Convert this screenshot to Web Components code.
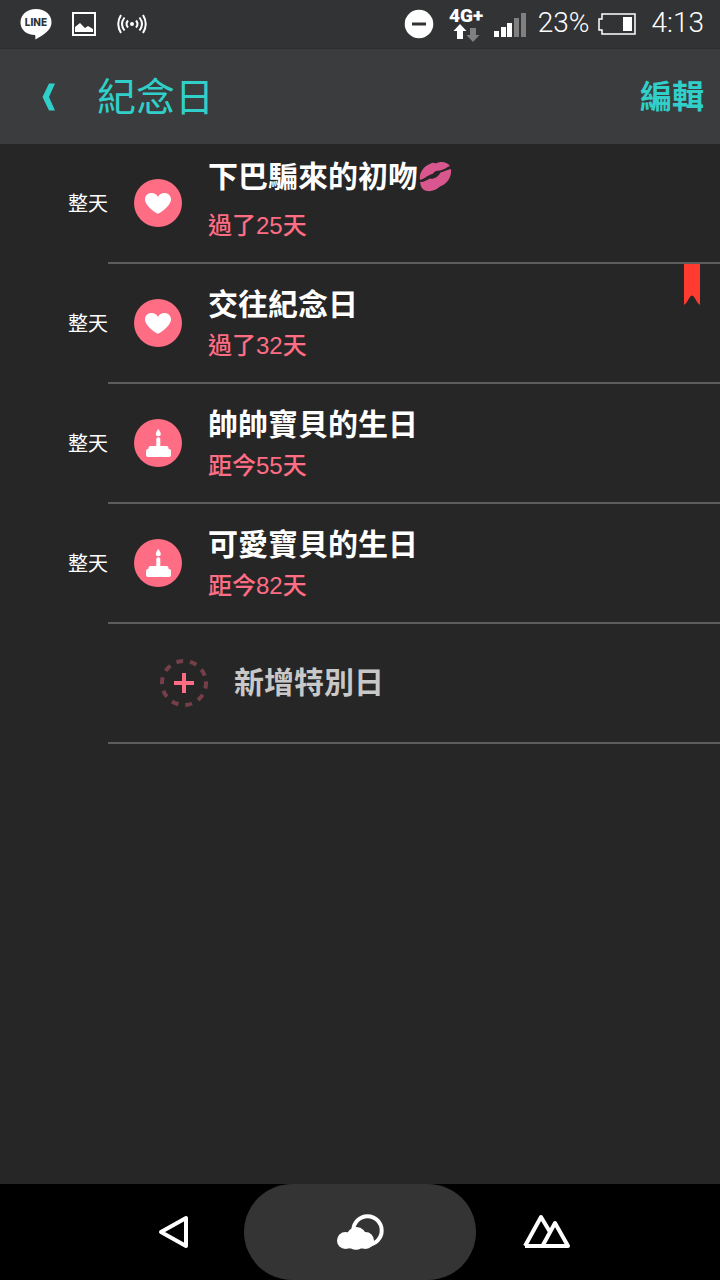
<!DOCTYPE html>
<html lang="zh-Hant">
<head>
  <meta charset="utf-8">
  <meta name="viewport" content="width=device-width, initial-scale=1">
  <title>紀念日</title>
  <style>
    :root {
      --color-bg: #262626;
      --color-bar: #3b3c3d;
      --color-status: #323334;
      --color-accent: #30cfc9;
      --color-pink: #ff6d85;
      --color-line: #5c5c5c;
      --color-muted: #c8c8c8;
    }

    body {
      margin: 0;
      min-height: 100vh;
      display: flex;
      flex-direction: column;
      background: var(--color-bg);
      color: #fff;
      font-family: Roboto, "Noto Sans CJK TC", sans-serif;
    }

    main {
      flex: 1;
    }
  </style>
</head>
<body>
  <status-bar battery="23%" time="4:13"></status-bar>
  <app-header>紀念日<span slot="action">編輯</span></app-header>
  <main>
    <day-item icon="heart" tall>下巴騙來的初吻<kiss-mark></kiss-mark><span slot="count">過了25天</span></day-item>
    <day-item icon="heart" marked>交往紀念日<span slot="count">過了32天</span></day-item>
    <day-item icon="cake">帥帥寶貝的生日<span slot="count">距今55天</span></day-item>
    <day-item icon="cake">可愛寶貝的生日<span slot="count">距今82天</span></day-item>
    <add-item>新增特別日</add-item>
  </main>
  <nav-bar></nav-bar>

  <script>
    const icons = {
      heart: `<svg width="48" height="48" viewBox="0 0 48 48" fill="#fff">
        <path d="M24 34.500C22 34.500 11 26.500 11 20.500C11 16.500 14 14 17.500 14C20.500 14 22.800 15.500 24 18C25.200 15.500 27.500 14 30.500 14C34 14 37 16.500 37 20.500C37 26.500 26 34.500 24 34.500Z"/>
      </svg>`,
      cake: `<svg width="48" height="48" viewBox="0 0 48 48" fill="#fff">
        <path d="M24.300 10C25.500 12 26.800 13.200 26.800 14.800A2.500 2.500 0 0 1 21.800 14.800C21.800 13.200 23.200 12 24.300 10Z"/>
        <path d="M22.300 20Q22.300 18.300 24.300 18.300Q26.300 18.300 26.300 20V27H33Q34.500 27 34.700 30H35.200Q37 30 37 32V36Q37 38 35 38H14Q12 38 12 36V32Q12 30 13.800 30H14.300Q14.500 27 16 27H22.300Z"/>
      </svg>`
    };

    class StatusBar extends HTMLElement {
      constructor() {
        super();
        this.attachShadow({ mode: 'open' });
      }

      connectedCallback() {
        this.shadowRoot.innerHTML = `
          <style>
            :host {
              display: flex;
              justify-content: space-between;
              align-items: center;
              box-sizing: border-box;
              height: 49px;
              padding: 0 16px 0 20px;
              background: var(--color-status);
              border-bottom: 1px solid #2b2c2c;
              font-size: 28px;
              font-weight: 300;
              line-height: 32px;
            }
            .group {
              display: flex;
              align-items: center;
            }
            .left { gap: 20px; }
            .right { gap: 10px; }
            .level {
              display: flex;
              align-items: center;
              gap: 8px;
              margin-left: 2px;
            }
            .time { margin-left: 6px; }
            .text { padding-bottom: 2px; }
            .network { margin-left: 4px; }
            svg { display: block; }
          </style>
          <div class="group left">
            <svg width="32" height="32" viewBox="0 0 32 32">
              <path fill="#fff" d="M16 1C25 1 31.500 6.500 31.500 14.500C31.500 21.500 24.500 26.500 15.500 31.500C15 30 15.800 28.500 15 27C6.500 27 .5 21.500 .5 14.500C.5 6.500 7 1 16 1Z"/>
              <text x="16" y="18" text-anchor="middle" font-family="Inter, sans-serif" font-size="10" font-weight="800" fill="#323334">LINE</text>
            </svg>
            <svg width="24" height="24" viewBox="0 0 24 24">
              <rect x="1" y="1" width="22" height="22" fill="none" stroke="#fff" stroke-width="2"/>
              <path fill="#fff" d="M3 20V15L8 11L13 16L16 14L21 17V20Z"/>
            </svg>
            <svg width="32" height="24" viewBox="0 0 32 24" fill="none" stroke="#fff" stroke-width="2">
              <circle cx="16" cy="12" r="2" fill="#fff" stroke="none"/>
              <path d="M12 8.500Q9 12 12 15.500M8.500 5.500Q3.500 12 8.500 18.500M5 3Q-.5 12 5 21M20 8.500Q23 12 20 15.500M23.500 5.500Q28.500 12 23.500 18.500M27 3Q32.500 12 27 21"/>
            </svg>
          </div>
          <div class="group right">
            <svg width="30" height="30" viewBox="0 0 30 30">
              <circle cx="15" cy="15" r="14.300" fill="#fff"/>
              <path d="M8 15H22" stroke="#323334" stroke-width="3"/>
            </svg>
            <svg class="network" width="36" height="44" viewBox="0 -4 36 44">
              <text x="1" y="16" font-family="Roboto, sans-serif" font-size="19" font-weight="900" fill="#fff">4G+</text>
              <path fill="#fff" d="M12 18L18.500 25H15V33H9V25H5.500Z"/>
              <path fill="#808080" d="M25 36L31.500 29H28V22H22V29H18.500Z"/>
            </svg>
            <svg width="32" height="26" viewBox="0 0 32 26" fill="#fff">
              <path d="M0 20H5V26H0ZM7 16H12V26H7ZM13 12H18V26H13Z"/>
              <path fill="#808080" d="M20 7H25V26H20ZM27 2H32V26H27Z"/>
            </svg>
            <div class="level">
              <span class="text">${this.getAttribute('battery')}</span>
              <svg width="38" height="22" viewBox="0 0 38 22">
                <path fill="none" stroke="#fff" stroke-width="1.500" d="M4 1H37V21H4V17H1V6H4Z"/>
                <rect x="25" y="4" width="9" height="14" fill="#fff"/>
              </svg>
            </div>
            <span class="text time">${this.getAttribute('time')}</span>
          </div>
        `;
      }
    }

    customElements.define('status-bar', StatusBar);

    class AppHeader extends HTMLElement {
      constructor() {
        super();
        this.attachShadow({ mode: 'open' });
        this.shadowRoot.innerHTML = `
          <style>
            :host {
              display: flex;
              align-items: center;
              box-sizing: border-box;
              height: 95px;
              padding: 0 16px 0 0;
              background: var(--color-bar);
              color: var(--color-accent);
            }
            button {
              display: block;
              padding: 0;
              border: 0;
              background: none;
              color: inherit;
              font: inherit;
            }
            .back {
              width: 97px;
              height: 95px;
            }
            .back svg {
              display: block;
              margin: 0 auto;
            }
            h1 {
              flex: 1;
              margin: 0;
              padding-top: 2px;
              font-size: 39px;
              font-weight: 400;
              line-height: 56px;
            }
            .action {
              font-size: 32px;
              font-weight: 700;
              line-height: 48px;
            }
          </style>
          <button class="back" type="button" aria-label="返回">
            <svg width="14" height="28" viewBox="0 0 14 28" fill="currentColor"><path d="M7 0.500H13L7 14L13 27.500H7L0.500 14Z"/></svg>
          </button>
          <h1><slot></slot></h1>
          <button class="action" type="button"><slot name="action"></slot></button>
        `;
      }
    }

    customElements.define('app-header', AppHeader);

    class KissMark extends HTMLElement {
      constructor() {
        super();
        this.attachShadow({ mode: 'open' });
        this.shadowRoot.innerHTML = `
          <style>
            :host {
              display: inline-block;
              vertical-align: middle;
            }
            svg { display: block; }
          </style>
          <svg width="34" height="36" viewBox="0 0 34 36" role="img" aria-label="💋" fill="#d9578e">
            <path d="M2 19C.5 12 6 5 12 3C14 1.500 16 1.500 18 2.500C22 0 29 .5 32 5C28 6.500 26 9 21.500 9.500C18 9.500 16.500 10.500 14.500 13C9 14 8 17.500 2 19Z"/>
            <path d="M2 21C7 21 8.500 19 12 17.500C15 18.500 20 16.500 22.500 11.500C26 11 29 8.500 33 8C34 17 28 23.500 22 25.500C18 30 8 32.500 4 27C2.500 25 2.500 23 2 21Z"/>
          </svg>
        `;
      }
    }

    customElements.define('kiss-mark', KissMark);

    class DayItem extends HTMLElement {
      constructor() {
        super();
        this.attachShadow({ mode: 'open' });
      }

      connectedCallback() {
        const mark = this.hasAttribute('marked')
          ? '<svg class="mark" width="16" height="41" viewBox="0 0 16 41" fill="#ff3b30"><path d="M0 0H16V41Q13.500 39.500 11 34.500Q8 28.500 5 34.500Q2.500 39.500 0 41Z"/></svg>'
          : '';

        this.shadowRoot.innerHTML = `
          <style>
            :host {
              display: flex;
              position: relative;
              height: 120px;
            }
            .when {
              box-sizing: border-box;
              width: 108px;
              padding-top: 45px;
              text-align: right;
              font-size: 20px;
              line-height: 30px;
            }
            .body {
              flex: 1;
              display: flex;
              align-items: center;
              gap: 26px;
              padding-left: 26px;
              border-bottom: 2px solid var(--color-line);
            }
            .icon {
              width: 48px;
              height: 48px;
              border-radius: 50%;
              background: var(--color-pink);
            }
            .icon svg { display: block; }
            .text {
              align-self: flex-end;
              padding-bottom: 16px;
            }
            h2 {
              margin: 0;
              font-size: 30px;
              font-weight: 700;
              line-height: 42px;
            }
            :host([tall]) h2 { line-height: 58px; }
            p {
              margin: 0;
              color: var(--color-pink);
              font-family: "Liberation Sans", "Noto Sans CJK TC", sans-serif;
              font-size: 24px;
              font-weight: 500;
              line-height: 40px;
            }
            .mark {
              position: absolute;
              top: 0;
              right: 20px;
            }
          </style>
          <div class="when">整天</div>
          <div class="body">
            <div class="icon">${icons[this.getAttribute('icon')]}</div>
            <div class="text">
              <h2><slot></slot></h2>
              <p><slot name="count"></slot></p>
            </div>
          </div>
          ${mark}
        `;
      }
    }

    customElements.define('day-item', DayItem);

    class AddItem extends HTMLElement {
      constructor() {
        super();
        this.attachShadow({ mode: 'open' });
        this.shadowRoot.innerHTML = `
          <style>
            :host {
              display: block;
              margin-left: 108px;
              border-bottom: 2px solid var(--color-line);
            }
            button {
              display: flex;
              align-items: center;
              gap: 26px;
              width: 100%;
              height: 118px;
              padding: 0 0 0 52px;
              border: 0;
              background: none;
              color: var(--color-muted);
              font-family: inherit;
              font-size: 30px;
              font-weight: 700;
              line-height: 42px;
            }
          </style>
          <button type="button">
            <svg width="48" height="48" viewBox="0 0 48 48" fill="none">
              <circle cx="24" cy="24" r="22" stroke="#753f4a" stroke-width="4" stroke-dasharray="7 6.820" transform="rotate(-4 24 24)"/>
              <path d="M14 24H34M24 14V34" stroke="#ff6d85" stroke-width="4"/>
            </svg>
            <span><slot></slot></span>
          </button>
        `;
      }
    }

    customElements.define('add-item', AddItem);

    class NavBar extends HTMLElement {
      constructor() {
        super();
        this.attachShadow({ mode: 'open' });
        this.shadowRoot.innerHTML = `
          <style>
            :host {
              display: flex;
              justify-content: center;
              height: 96px;
              background: #000;
            }
            button {
              display: grid;
              place-items: center;
              width: 140px;
              padding: 0;
              border: 0;
              background: none;
            }
            .home {
              width: 232px;
              border-radius: 48px;
              background: #343434;
            }
          </style>
          <button type="button" aria-label="返回">
            <svg width="32" height="34" viewBox="0 0 32 34"><path d="M28 3V31L3 17Z" fill="none" stroke="#fff" stroke-width="4" stroke-linejoin="round"/></svg>
          </button>
          <button class="home" type="button" aria-label="首頁">
            <svg width="48" height="36" viewBox="0 0 48 36">
              <circle cx="31.500" cy="16.500" r="14.200" fill="none" stroke="#fff" stroke-width="4"/>
              <g fill="#fff">
                <circle cx="9.500" cy="26.500" r="8.500"/>
                <circle cx="20.500" cy="23" r="10"/>
                <circle cx="29.500" cy="26.500" r="8.500"/>
                <path d="M9 22H30V34L25 34.500Q20 37 15 34.500L9 34Z"/>
              </g>
            </svg>
          </button>
          <button type="button" aria-label="最近使用">
            <svg width="48" height="36" viewBox="0 0 48 36" fill="none" stroke="#fff" stroke-width="4" stroke-linejoin="round">
              <path d="M3 32H46L33 9L21 31M3 32L19 3L28 18"/>
            </svg>
          </button>
        `;
      }
    }

    customElements.define('nav-bar', NavBar);
  </script>
</body>
</html>
